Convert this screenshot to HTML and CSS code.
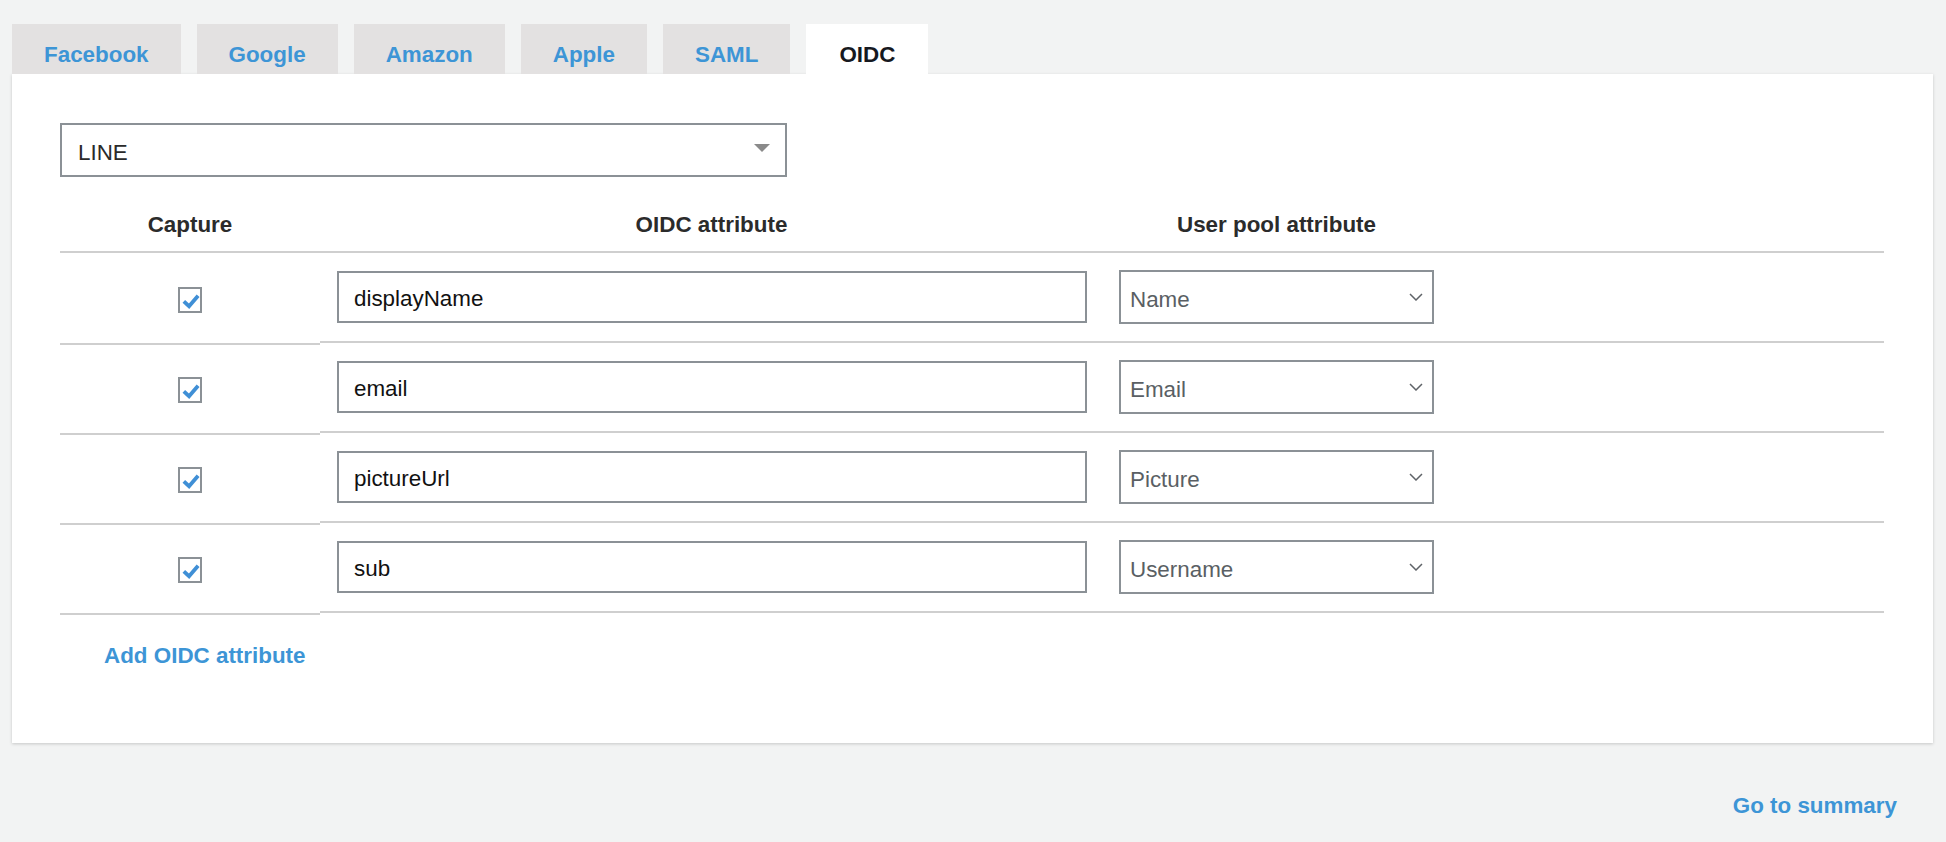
FILE: index.html
```html
<!DOCTYPE html>
<html lang="en">
<head>
<meta charset="utf-8">
<title>OIDC attribute mapping</title>
<link rel="stylesheet" href="styles.css">
</head>
<body>
<div class="page">
  <div class="tabs">
    <div class="tab">Facebook</div>
    <div class="tab">Google</div>
    <div class="tab">Amazon</div>
    <div class="tab">Apple</div>
    <div class="tab">SAML</div>
    <div class="tab active">OIDC</div>
  </div>
  <div class="panel">
    <div class="provider-select">
      <span class="provider-value">LINE</span>
      <span class="tri"></span>
    </div>
    <div class="table">
      <div class="thead">
        <div class="th col-cap">Capture</div>
        <div class="th col-oidc">OIDC attribute</div>
        <div class="th col-pool">User pool attribute</div>
      </div>

      <div class="row">
        <div class="col-cap cell-cap">
          <span class="checkbox"><svg viewBox="0 0 21 22" width="21" height="22"><path d="M4 12.5 L9.5 17.5 L19 6.5" fill="none" stroke="#3f8fd6" stroke-width="4" stroke-linecap="butt" stroke-linejoin="miter"/></svg></span>
        </div>
        <div class="row-main">
          <div class="col-oidc cell"><div class="text-input">displayName</div></div>
          <div class="col-pool cell"><div class="pool-select"><span>Name</span><svg class="chev" viewBox="0 0 14 8" width="14" height="8"><path d="M1 1 L7 7 L13 1" fill="none" stroke="#5f6368" stroke-width="1.5"/></svg></div></div>
        </div>
      </div>

      <div class="row">
        <div class="col-cap cell-cap">
          <span class="checkbox"><svg viewBox="0 0 21 22" width="21" height="22"><path d="M4 12.5 L9.5 17.5 L19 6.5" fill="none" stroke="#3f8fd6" stroke-width="4" stroke-linecap="butt" stroke-linejoin="miter"/></svg></span>
        </div>
        <div class="row-main">
          <div class="col-oidc cell"><div class="text-input">email</div></div>
          <div class="col-pool cell"><div class="pool-select"><span>Email</span><svg class="chev" viewBox="0 0 14 8" width="14" height="8"><path d="M1 1 L7 7 L13 1" fill="none" stroke="#5f6368" stroke-width="1.5"/></svg></div></div>
        </div>
      </div>

      <div class="row">
        <div class="col-cap cell-cap">
          <span class="checkbox"><svg viewBox="0 0 21 22" width="21" height="22"><path d="M4 12.5 L9.5 17.5 L19 6.5" fill="none" stroke="#3f8fd6" stroke-width="4" stroke-linecap="butt" stroke-linejoin="miter"/></svg></span>
        </div>
        <div class="row-main">
          <div class="col-oidc cell"><div class="text-input">pictureUrl</div></div>
          <div class="col-pool cell"><div class="pool-select"><span>Picture</span><svg class="chev" viewBox="0 0 14 8" width="14" height="8"><path d="M1 1 L7 7 L13 1" fill="none" stroke="#5f6368" stroke-width="1.5"/></svg></div></div>
        </div>
      </div>

      <div class="row">
        <div class="col-cap cell-cap">
          <span class="checkbox"><svg viewBox="0 0 21 22" width="21" height="22"><path d="M4 12.5 L9.5 17.5 L19 6.5" fill="none" stroke="#3f8fd6" stroke-width="4" stroke-linecap="butt" stroke-linejoin="miter"/></svg></span>
        </div>
        <div class="row-main">
          <div class="col-oidc cell"><div class="text-input">sub</div></div>
          <div class="col-pool cell"><div class="pool-select"><span>Username</span><svg class="chev" viewBox="0 0 14 8" width="14" height="8"><path d="M1 1 L7 7 L13 1" fill="none" stroke="#5f6368" stroke-width="1.5"/></svg></div></div>
        </div>
      </div>
    </div>
    <div class="add-row"><a class="link">Add OIDC attribute</a></div>
  </div>
  <div class="footer"><a class="link">Go to summary</a></div>
</div>
</body>
</html>
```

FILE: styles.css
```css
* { box-sizing: border-box; }

html, body {
  margin: 0;
  padding: 0;
  background: #f2f3f3;
  font-family: "Liberation Sans", Arial, Helvetica, sans-serif;
  font-size: 22.4px;
  color: #16191f;
}

.page {
  padding: 24px 13px 0 12px;
}

.tabs {
  display: flex;
  gap: 16px;
  height: 50px;
  position: relative;
  z-index: 2;
}

.tab {
  height: 50px;
  padding: 18px 32px 0 32px;
  line-height: 26px;
  font-weight: bold;
  color: #3d95d6;
  background: #e3e1e1;
}

.tab.active {
  background: #ffffff;
  color: #16191f;
  padding-left: 33px;
  padding-right: 33px;
}

.panel {
  background: #ffffff;
  box-shadow: 0 1px 3px rgba(0, 0, 0, 0.18);
  padding: 49px 49px 74px 48px;
  position: relative;
  z-index: 1;
}

.provider-select {
  width: 727px;
  height: 54px;
  border: 2px solid #8b9196;
  display: flex;
  align-items: center;
  justify-content: space-between;
  padding: 0 15px 0 16px;
  color: #2a2a2a;
  line-height: 26px;
}

.provider-value {
  padding-top: 5px;
}

.tri {
  width: 0;
  height: 0;
  border-left: 8px solid transparent;
  border-right: 8px solid transparent;
  border-top: 8px solid #8a8a8a;
  margin-top: -4px;
}

.table {
  width: 100%;
}

.thead {
  display: flex;
  border-bottom: 2px solid #cfcfcf;
}

.th {
  padding: 35px 0 13px 0;
  line-height: 26px;
  font-weight: bold;
  color: #2b2b2b;
  text-align: center;
}

.col-cap { width: 260px; flex: none; }
.col-oidc { width: 783px; flex: none; }
.col-pool { width: 347px; flex: none; }

.row {
  display: flex;
  align-items: stretch;
}

.cell-cap {
  border-bottom: 2px solid #cfcfcf;
  margin-bottom: -2px;
  display: flex;
  align-items: center;
  justify-content: center;
}

.row-main {
  flex: 1;
  display: flex;
  align-items: center;
  border-bottom: 2px solid #cfcfcf;
  padding: 17px 0 17px 0;
}

.cell {
  display: flex;
  align-items: center;
}

.checkbox {
  width: 24px;
  height: 26px;
  border: 2px solid #8b9196;
  background: #fff;
  display: flex;
  align-items: center;
  justify-content: center;
  margin-top: 4px;
}

.checkbox svg { display: block; }

.text-input {
  margin-left: 17px;
  width: 750px;
  height: 52px;
  border: 2px solid #8b9196;
  padding: 4px 15px 0 15px;
  display: flex;
  align-items: center;
  line-height: 26px;
  color: #111;
}

.pool-select {
  margin-left: 16px;
  width: 315px;
  height: 54px;
  border: 2px solid #8b9196;
  padding: 0 9px 0 9px;
  display: flex;
  align-items: center;
  justify-content: space-between;
  line-height: 26px;
  color: #5a5f64;
}

.pool-select span {
  padding-top: 5px;
}

.chev { display: block; }

.link {
  color: #3d95d6;
  font-weight: bold;
  text-decoration: none;
  line-height: 26px;
}

.add-row {
  padding: 30px 0 0 44px;
  line-height: 26px;
}

.footer {
  display: flex;
  justify-content: flex-end;
  padding: 50px 36px 0 0;
  line-height: 26px;
}
```
